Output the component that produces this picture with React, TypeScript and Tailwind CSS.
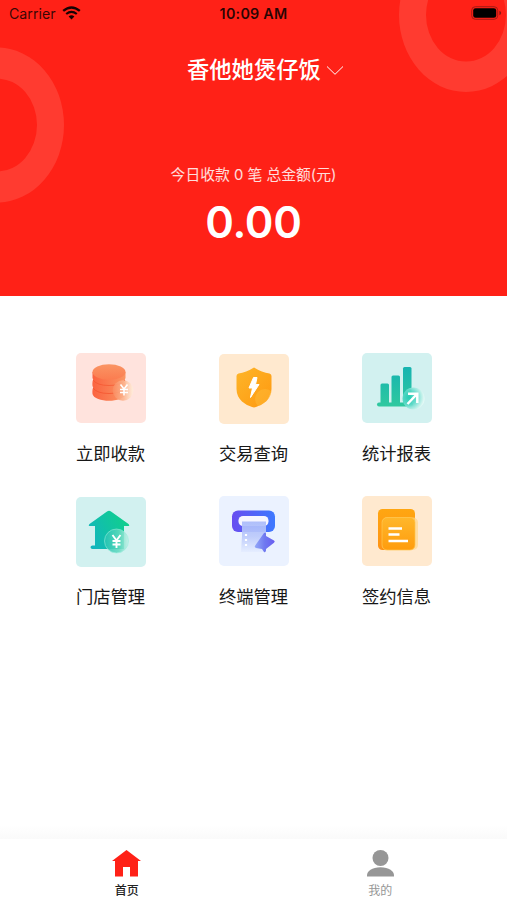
import type { ReactNode } from 'react';

function Coins() {
  return (
    <svg viewBox="0 0 70 70" className="size-full">
      <defs>
        <linearGradient id="coinTop" x1="0" y1="0" x2="0" y2="1">
          <stop offset="0" stopColor="#fa9564" />
          <stop offset="1" stopColor="#fb7c50" />
        </linearGradient>
        <linearGradient id="coinSide" x1="0" x2="1">
          <stop offset="0" stopColor="#fb6340" />
          <stop offset="1" stopColor="#fa9563" />
        </linearGradient>
        <linearGradient id="coinGlass" x1="0" x2="1">
          <stop offset="0" stopColor="#fa8c60" stopOpacity=".9" />
          <stop offset=".55" stopColor="#fcb691" stopOpacity=".9" />
          <stop offset="1" stopColor="#fff0dc" stopOpacity=".75" />
        </linearGradient>
      </defs>
      <path d="M17.500 34q-1.500 2-1 7c2 9 31 9 33 0q.5-5-1-7z" fill="url(#coinSide)" />
      <path d="M17.500 26q-1.500 2-1 7c2 8 31 8 33 0q.5-5-1-7z" fill="url(#coinSide)" />
      <path d="M17 35q4 5.500 16 5.500T49 35" fill="none" stroke="#f4522d" strokeWidth=".9" opacity=".8" />
      <path d="M16.500 19v6c2 8 31 8 33 0v-6z" fill="url(#coinSide)" />
      <path d="M17 27q4 5.500 16 5.500T49 27" fill="none" stroke="#f4522d" strokeWidth=".9" opacity=".7" />
      <ellipse cx="33" cy="19" rx="16.500" ry="7.800" fill="url(#coinTop)" />
      <circle cx="47" cy="37.500" r="10.300" fill="url(#coinGlass)" />
      <path d="m44.500 31.500 3.500 4.500 3.500-4.500M44 36.500h8M44 39.500h8M48 36V42.500" fill="none" stroke="#fff" strokeWidth="1.600" />
    </svg>
  );
}

function Shield() {
  return (
    <svg viewBox="0 0 70 70" className="size-full">
      <defs>
        <linearGradient id="shieldFill" x1="0" y1="0" x2="1" y2="1">
          <stop offset="0" stopColor="#fdb72b" />
          <stop offset="1" stopColor="#ff970e" />
        </linearGradient>
        <clipPath id="shieldClip">
          <path d="M35 13.500q8 5 15.500 6 2 .5 2 2.500v13C52.500 46 43 51 37 53q-2 .8-4 0C27 51 17.500 46 17.500 35V22q0-2 2-2.500Q27 18.500 35 13.500z" />
        </clipPath>
      </defs>
      <g clipPath="url(#shieldClip)">
        <path d="M15 12h40v43H15z" fill="url(#shieldFill)" />
        <circle cx="46" cy="45" r="10" fill="#ffc548" opacity=".35" />
        <path d="M53 36 45 54h8z" fill="#ffe39d" opacity=".55" />
      </g>
      <path d="M34.500 23.500h3.500l-1.500 7h3.500l-8.500 13 2-9.500h-3.500z" fill="#fff" stroke="#fff" strokeWidth="1" strokeLinejoin="round" />
    </svg>
  );
}

function Chart() {
  return (
    <svg viewBox="0 0 70 70" className="size-full">
      <defs>
        <linearGradient id="chartFill" gradientUnits="userSpaceOnUse" x1="0" y1="15" x2="0" y2="54">
          <stop offset="0" stopColor="#17b4b0" />
          <stop offset="1" stopColor="#30c99e" />
        </linearGradient>
        <radialGradient id="chartGlass" cx=".3" cy=".45" r=".72">
          <stop offset="0" stopColor="#26cdb5" />
          <stop offset=".45" stopColor="#5cd9c8" />
          <stop offset="1" stopColor="#f1fcfa" />
        </radialGradient>
      </defs>
      <g fill="url(#chartFill)">
        <rect x="18.500" y="30.500" width="8.500" height="22" rx="1.500" />
        <rect x="29.500" y="22.500" width="8.500" height="30" rx="1.500" />
        <rect x="41" y="14" width="8.500" height="38" rx="1.500" />
        <rect x="15" y="49.500" width="36" height="4" rx="2" />
      </g>
      <circle cx="51.500" cy="45.500" r="11" fill="url(#chartGlass)" opacity=".92" />
      <path d="m45.500 51 9.500-10M46 40.800h9.300v9.200" fill="none" stroke="#fff" strokeWidth="2.500" />
    </svg>
  );
}

function Store() {
  return (
    <svg viewBox="0 0 70 70" className="size-full">
      <defs>
        <linearGradient id="storeFill" x1="0" y1=".7" x2="1" y2=".2">
          <stop offset="0" stopColor="#12b6bd" />
          <stop offset="1" stopColor="#10d189" />
        </linearGradient>
        <linearGradient id="storeGlass" x1="0" x2="1">
          <stop offset="0" stopColor="#27c5b4" />
          <stop offset=".6" stopColor="#61dac0" />
          <stop offset="1" stopColor="#c6f1e8" />
        </linearGradient>
      </defs>
      <path d="M31 14.500q2-1.500 4 0L52.500 27q2 2-1 2H48v23H16.500q-2 0-2-1.700t2-1.800H19V29h-4.500q-3 0-1-2z" fill="url(#storeFill)" />
      <circle cx="40.500" cy="44" r="12" fill="url(#storeGlass)" opacity=".85" stroke="#9becdc" strokeWidth=".7" />
      <path d="m36.500 38 4 5.500 4-5.500M36.500 44h8M36.500 47.500h8M40.500 43v8" fill="none" stroke="#fff" strokeWidth="1.900" />
    </svg>
  );
}

function Terminal() {
  return (
    <svg viewBox="0 0 70 70" className="size-full">
      <defs>
        <linearGradient id="slotFill" x1="0" x2="1">
          <stop offset="0" stopColor="#684df0" />
          <stop offset="1" stopColor="#3e79ff" />
        </linearGradient>
        <linearGradient id="ticketFill" x1="0" y1="0" x2="0" y2="1">
          <stop offset="0" stopColor="#a9bafa" />
          <stop offset=".5" stopColor="#bccafb" />
          <stop offset="1" stopColor="#e5edff" />
        </linearGradient>
        <linearGradient id="arrowFill" x1="0" x2="1">
          <stop offset="0" stopColor="#93a8f8" />
          <stop offset=".5" stopColor="#6f79f0" />
          <stop offset="1" stopColor="#695df0" />
        </linearGradient>
      </defs>
      <rect x="13" y="14.500" width="43" height="21.500" rx="6" fill="url(#slotFill)" />
      <rect x="19.500" y="20" width="30" height="10" rx="4.500" fill="#f6f6ff" />
      <path d="M23 25.500h24V38l-1 18H22l1-16z" fill="url(#ticketFill)" opacity=".92" />
      <path d="M45 37q2-1.500 2 1v2l8 4.500q1.500 1 0 2.200L47 53v1.500q-.5 2.500-2 1.500l-2-3-6-1q-2-.8-.8-2.500z" fill="url(#arrowFill)" />
      <path d="M27 38v14" stroke="#fff" strokeWidth="2.200" strokeDasharray="2 3" />
    </svg>
  );
}

function Contract() {
  return (
    <svg viewBox="0 0 70 70" className="size-full">
      <defs>
        <linearGradient id="docBack" x1="0" y1="0" x2="0" y2="1">
          <stop offset="0" stopColor="#ffa611" />
          <stop offset="1" stopColor="#ff9315" />
        </linearGradient>
        <linearGradient id="docFront" x1="0" y1="0" x2="0" y2="1">
          <stop offset="0" stopColor="#ffb72b" />
          <stop offset="1" stopColor="#ff9c0d" />
        </linearGradient>
      </defs>
      <rect x="16" y="13" width="37" height="41" rx="4.500" fill="url(#docBack)" />
      <rect x="20" y="21.500" width="36" height="32.500" rx="5" fill="#ffd68b" opacity=".7" />
      <rect x="20" y="21.500" width="33" height="32.500" rx="5" fill="url(#docFront)" stroke="#ffc752" strokeWidth=".7" />
      <path d="M26.500 32.500h13.500M26.500 38.500h11M26.500 45h19.500" stroke="#fff" strokeWidth="2.400" />
    </svg>
  );
}

function Tile({ label, color, lowered, children }: { label: string; color: string; lowered?: boolean; children: ReactNode }) {
  return (
    <div className={`flex h-[143px] w-[143px] flex-col items-center ${lowered ? 'pt-px' : ''}`}>
      <div className={`size-[70px] overflow-hidden rounded-[5px] ${color}`}>{children}</div>
      <div className={`${lowered ? 'mt-[17px]' : 'mt-[18px]'} text-[17.3px] leading-[26px] text-[#171717]`}>{label}</div>
    </div>
  );
}

function StatusBar() {
  return (
    <div className="relative flex h-7 items-center justify-between px-[9px] text-black/80">
      <div className="flex w-40 items-center gap-[6px]">
        <span className="text-[14.200px]">Carrier</span>
        <svg width="19" height="14" viewBox="0 0 19 14" className="-mt-[2px]" fill="none" stroke="#170303">
          <path d="M1.200 4.900q8.300-7 16.600 0" strokeWidth="2.400" />
          <path d="M4.200 8q5.300-4.300 10.600 0" strokeWidth="2.200" />
          <path d="m6.600 10.400 2.900 3.100 2.900-3.100q-2.900-2.200-5.800 0z" fill="#170303" stroke="none" />
        </svg>
      </div>
      <span className="-mt-px text-[14.300px] font-semibold tracking-[0.250px] text-black/85">10:09 AM</span>
      <div className="flex w-40 justify-end">
        <svg width="31" height="14" viewBox="0 0 31 14" className="-mt-[2px] -mr-[4px]">
          <rect x=".7" y=".7" width="26" height="12.600" rx="3.600" fill="none" stroke="#a51b14" strokeWidth="1" />
          <rect x="2.200" y="2.200" width="23" height="9.600" rx="2.300" fill="#000" />
          <path d="M28.400 4.700q1.800.8 1.800 2.300t-1.800 2.300z" fill="#8c1713" />
        </svg>
      </div>
    </div>
  );
}

export default function App() {
  return (
    <main className="flex h-[900px] w-[507px] flex-col overflow-hidden bg-white font-['Inter','Noto_Sans_CJK_SC',sans-serif]">
      <header className="relative flex h-[296px] flex-col bg-[#ff2117] text-white">
        <svg className="absolute inset-0" width="507" height="296" fill="#ff3b30" fillRule="evenodd">
          <path d="M-70 125a67 77.500 0 1 0 134 0a67 77.500 0 1 0-134 0zM-43 125a40 46.500 0 1 0 80 0a40 46.500 0 1 0-80 0z" />
          <path d="M399 15a67 77 0 1 0 134 0a67 77 0 1 0-134 0zM426 15a40 46.500 0 1 0 80 0a40 46.500 0 1 0-80 0z" />
        </svg>
        <StatusBar />
        <div className="relative mt-[26px] flex h-8 items-center pl-[187px]">
          <h1 className="text-[22.300px] leading-8 font-medium whitespace-nowrap">香他她煲仔饭</h1>
          <svg width="18" height="12" viewBox="0 0 18 12" className="ml-[5px] mt-[2px]" fill="none" stroke="white" strokeWidth="1">
            <path d="m1 1.500 8 7.800 8-7.800" />
          </svg>
        </div>
        <p className="relative mt-[77px] text-center text-[14.800px] leading-6 whitespace-pre text-white/85">今日收款 0 笔 总金额(元)</p>
        <strong className="relative mt-[9px] text-center text-[43.500px] leading-[52px] font-semibold tracking-[-0.200px]">0.00</strong>
      </header>
      <section className="mx-auto mt-[57px] grid w-[429px] grid-cols-3">
        <Tile label="立即收款" color="bg-[#ffe3dd]"><Coins /></Tile>
        <Tile label="交易查询" color="bg-[#ffe9cf]" lowered><Shield /></Tile>
        <Tile label="统计报表" color="bg-[#d2f1f0]"><Chart /></Tile>
        <Tile label="门店管理" color="bg-[#d2f1f0]" lowered><Store /></Tile>
        <Tile label="终端管理" color="bg-[#ebf2ff]"><Terminal /></Tile>
        <Tile label="签约信息" color="bg-[#ffe9cf]"><Contract /></Tile>
      </section>
      <div className="mt-auto h-[14px] bg-gradient-to-b from-white to-[#fafafa]" />
      <nav className="grid h-[61px] grid-cols-2 text-xs">
        <div className="flex flex-col items-center pt-[11px] text-[#222]">
          <svg width="29" height="27" viewBox="0 0 29 27" fill="#ff2117">
            <path d="M14.500 0 29 11h-3v15.500h-8V17h-7v9.500H3V11H0z" />
          </svg>
          <span className="mt-[6px] leading-4 font-medium">首页</span>
        </div>
        <div className="flex flex-col items-center pt-[11px] text-[#969696]">
          <svg width="27" height="27" viewBox="0 0 27 27" fill="#969696">
            <circle cx="13.500" cy="8" r="8" />
            <path d="M0 26.500v-1.300c0-4 5-8 13.500-8s13.500 4 13.500 8v1.300z" />
          </svg>
          <span className="mt-[6px] leading-4">我的</span>
        </div>
      </nav>
    </main>
  );
}
